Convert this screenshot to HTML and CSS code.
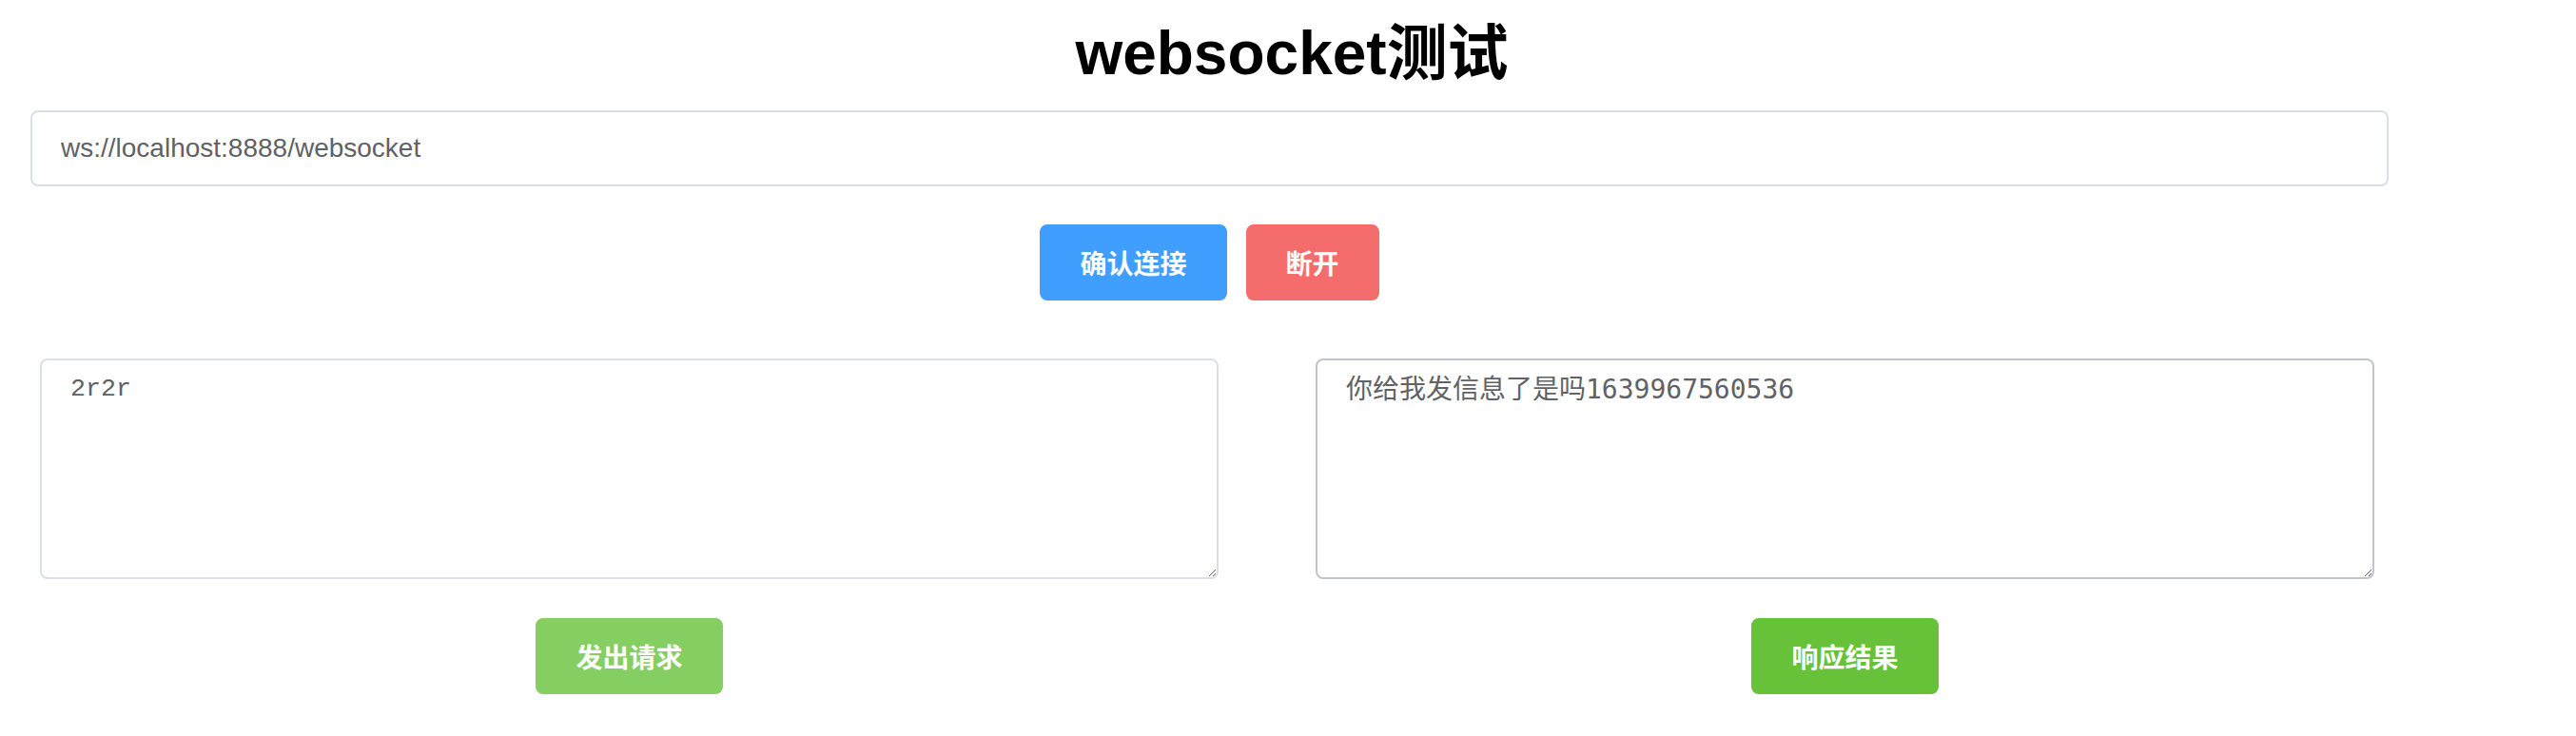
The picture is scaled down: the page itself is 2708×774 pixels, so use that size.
FILE: index.html
```html
<!DOCTYPE html>
<html lang="zh-CN">
<head>
<meta charset="utf-8">
<title>websocket测试</title>
<link rel="stylesheet" href="styles.css">
</head>
<body>
<div class="app">
  <h1 class="title">websocket测试</h1>
  <div class="container">
    <input class="url-input" type="text" value="ws://localhost:8888/websocket">
    <div class="actions">
      <button class="btn btn-primary">确认连接</button>
      <button class="btn btn-danger">断开</button>
    </div>
    <div class="panels">
      <div class="panel panel-left">
        <textarea class="box box-mono">2r2r</textarea>
        <button class="btn btn-success-light">发出请求</button>
      </div>
      <div class="panel panel-right">
        <textarea class="box box-sans box-hover">你给我发信息了是吗1639967560536</textarea>
        <button class="btn btn-success">响应结果</button>
      </div>
    </div>
  </div>
</div>
</body>
</html>
```
FILE: styles.css
```css
html, body {
  margin: 0;
  padding: 0;
  background: #ffffff;
}

.app {
  font-family: "Liberation Sans", "Noto Sans CJK SC", sans-serif;
  color: #000;
}

.title {
  margin: 19px 0 0;
  padding-left: 8px;
  font-size: 64px;
  line-height: 74px;
  font-weight: 700;
  text-align: center;
  font-family: "Liberation Sans", "Noto Sans CJK SC", sans-serif;
}

.container {
  margin: 23px 0 0 32px;
  width: 2479px;
}

.url-input {
  display: block;
  box-sizing: border-box;
  width: 100%;
  height: 80px;
  margin: 0;
  padding: 0 30px;
  border: 2px solid #DCDFE6;
  border-radius: 8px;
  font-family: "Liberation Sans", "Noto Sans CJK SC", sans-serif;
  font-size: 28px;
  color: #606266;
  outline: none;
  background: #fff;
}

.actions {
  display: flex;
  justify-content: center;
  gap: 20px;
  margin-top: 40px;
}

.btn {
  box-sizing: border-box;
  height: 80px;
  padding: 0 40px;
  border: 2px solid transparent;
  border-radius: 8px;
  font-family: "Noto Sans CJK SC", sans-serif;
  font-size: 28px;
  font-weight: 700;
  line-height: 1;
  color: #fff;
  cursor: pointer;
}

.btn-primary { background: #409EFF; border-color: #409EFF; }
.btn-danger { background: #F56C6C; border-color: #F56C6C; }
.btn-success { background: #67C23A; border-color: #67C23A; }
.btn-success-light { background: #85CE61; border-color: #85CE61; }

.panels {
  display: flex;
  gap: 102px;
  margin-top: 61px;
  padding-left: 10px;
}

.panel {
  display: flex;
  flex-direction: column;
  align-items: center;
  gap: 41px;
}

.panel-left { width: 1239px; }
.panel-right { width: 1113px; }

.box {
  display: block;
  box-sizing: border-box;
  width: 100%;
  height: 232px;
  margin: 0;
  padding: 10px 30px;
  border: 2px solid #DCDFE6;
  border-radius: 8px;
  color: #606266;
  resize: vertical;
  outline: none;
  background: #fff;
}

.box-mono {
  font-family: "Liberation Mono", monospace;
  font-size: 26.67px;
  line-height: 40px;
}

.box-sans {
  font-family: "DejaVu Sans Mono", "Noto Sans CJK SC", monospace;
  font-size: 28px;
  line-height: 42px;
}

.box-hover {
  border-color: #C0C4CC;
}
```
